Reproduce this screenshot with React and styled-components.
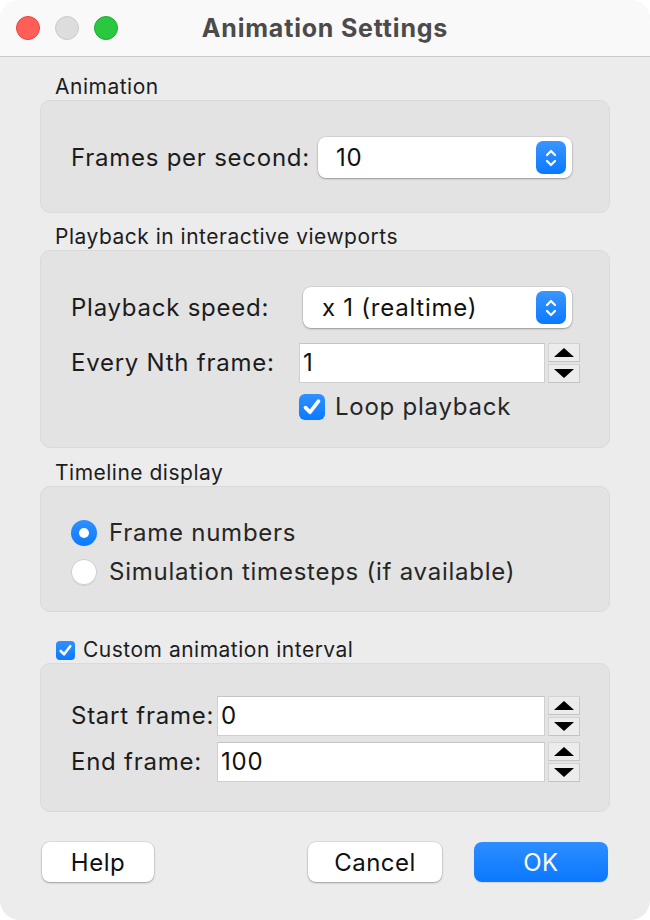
import React from "react";
import styled, { createGlobalStyle } from "styled-components";

const GlobalStyle = createGlobalStyle`
  html, body {
    margin: 0;
    padding: 0;
    background: #ffffff;
  }
  body {
    font-family: Inter, "Liberation Sans", sans-serif;
    -webkit-font-smoothing: antialiased;
  }
  * { box-sizing: border-box; }
`;

const Window = styled.div`
  width: 650px;
  height: 920px;
  border-radius: 20px;
  overflow: hidden;
  background: #ececec;
  display: flex;
  flex-direction: column;
`;

const TitleBar = styled.div`
  height: 57px;
  flex-shrink: 0;
  background: #f9f9f9;
  border-bottom: 1px solid #cbcbcb;
  display: grid;
  grid-template-columns: 1fr auto 1fr;
  align-items: center;
`;

const Lights = styled.div`
  display: flex;
  gap: 15px;
  padding-left: 16px;
`;

const Light = styled.span`
  width: 24px;
  height: 24px;
  border-radius: 50%;
  background: ${(p) => p.color};
  border: 1px solid ${(p) => p.edge};
`;

const Title = styled.div`
  font-size: 25px;
  font-weight: 700;
  color: #4b4b4b;
  letter-spacing: 0.8px;
`;

const Body = styled.div`
  flex: 1;
  display: flex;
  flex-direction: column;
  padding: 19px 40px 0;
`;

const SectionLabel = styled.div`
  font-size: 21px;
  line-height: 22px;
  letter-spacing: 0.5px;
  color: #1d1d1d;
  padding-left: 15px;
  margin-top: ${(p) => p.top || 0}px;
  margin-bottom: 2px;
  display: flex;
  align-items: center;
  gap: 8px;
`;

const Group = styled.div`
  background: #e3e3e3;
  border: 1px solid #dadada;
  border-radius: 10px;
  padding: ${(p) => p.pad};
  display: grid;
  grid-template-columns: ${(p) => p.cols || "auto 1fr"};
  align-items: center;
  row-gap: ${(p) => p.gap || 0}px;
  font-size: 24px;
  line-height: 28px;
  letter-spacing: 0.75px;
`;

const FieldLabel = styled.div`
  color: #1c1c1c;
  white-space: nowrap;
`;

const Popup = styled.div`
  height: 41px;
  margin-left: ${(p) => p.inset || 0}px;
  margin-right: 37px;
  background: #ffffff;
  border-radius: 8px;
  box-shadow: 0 1px 2px rgba(0, 0, 0, 0.3), 0 0 0 0.5px rgba(0, 0, 0, 0.12);
  display: flex;
  align-items: center;
  justify-content: space-between;
  padding: 0 6px 0 ${(p) => p.textPad || 18}px;
  color: #111;
`;

const Stepper = styled.div`
  width: 30px;
  height: 33px;
  border-radius: 7px;
  background: linear-gradient(#3a95ff, #0a79ff);
  display: flex;
  align-items: center;
  justify-content: center;
`;

const SpinRow = styled.div`
  display: flex;
  align-items: center;
  gap: 3px;
  margin-right: 29px;
`;

const TextField = styled.div`
  flex: 1;
  height: 40px;
  background: #ffffff;
  border: 1px solid #cfcfcf;
  border-top-color: #c4c4c4;
  display: flex;
  align-items: center;
  padding-left: 3px;
  color: #111;
`;

const SpinButtons = styled.div`
  display: flex;
  flex-direction: column;
  gap: 2px;
`;

const SpinButton = styled.div`
  width: 32px;
  height: 19px;
  background: #ececec;
  border: 1px solid #d3d3d3;
  border-right-color: #c8c8c8;
  border-bottom-color: #c3c3c3;
  display: flex;
  align-items: center;
  justify-content: center;
`;

const CheckRow = styled.div`
  grid-column: 2;
  display: flex;
  align-items: center;
  gap: 10px;
  margin-top: -5px;
  color: #262626;
`;

const CheckBox = styled.span`
  width: ${(p) => p.size}px;
  height: ${(p) => p.size}px;
  border-radius: ${(p) => (p.size > 22 ? 6 : 4)}px;
  background: linear-gradient(#2f90ff, #0b7aff);
  display: inline-flex;
  align-items: center;
  justify-content: center;
  flex-shrink: 0;
`;

const RadioRow = styled.div`
  display: flex;
  align-items: center;
  gap: 12px;
  color: #262626;
`;

const Radio = styled.span`
  width: 26px;
  height: 26px;
  border-radius: 50%;
  flex-shrink: 0;
  display: inline-flex;
  align-items: center;
  justify-content: center;
  background: ${(p) => (p.on ? "linear-gradient(#2f90ff, #0b7aff)" : "#ffffff")};
  box-shadow: ${(p) =>
    p.on ? "none" : "0 0 0 1px #cdcdcd inset, 0 1px 1px rgba(0,0,0,0.08)"};
  &::after {
    content: "";
    display: ${(p) => (p.on ? "block" : "none")};
    width: 10px;
    height: 10px;
    border-radius: 50%;
    background: #ffffff;
  }
`;

const Footer = styled.div`
  display: flex;
  align-items: center;
  padding: 30px 2px 0;
  gap: 32px;
`;

const Button = styled.div`
  width: ${(p) => p.w}px;
  height: 40px;
  border-radius: 8px;
  display: flex;
  align-items: center;
  justify-content: center;
  font-size: 24px;
  letter-spacing: 0.5px;
  color: ${(p) => (p.primary ? "#ffffff" : "#111111")};
  background: ${(p) =>
    p.primary ? "linear-gradient(#2d8eff, #0a78ff)" : "#ffffff"};
  box-shadow: ${(p) =>
    p.primary
      ? "0 1px 1px rgba(0,0,0,0.1)"
      : "0 1px 2px rgba(0,0,0,0.3), 0 0 0 0.5px rgba(0,0,0,0.12)"};
  margin-left: ${(p) => (p.push ? "auto" : "0")};
`;

const Chevrons = () => (
  <svg width="14" height="24" viewBox="0 0 14 24">
    <path
      d="M3 9 L7 5 L11 9 M3 15 L7 19 L11 15"
      fill="none"
      stroke="#fff"
      strokeWidth="2.2"
      strokeLinecap="round"
      strokeLinejoin="round"
    />
  </svg>
);

const Triangle = ({ down }) => (
  <svg width="22" height="11" viewBox="0 0 22 11">
    <path d={down ? "M1 1 H21 L11 10 Z" : "M1 10 H21 L11 1 Z"} fill="#000" />
  </svg>
);

const Check = ({ size }) => (
  <svg width={size} height={size} viewBox="0 0 20 20">
    <path
      d="M5 10.5 L8.5 14 L15 5.5"
      fill="none"
      stroke="#fff"
      strokeWidth="2.8"
      strokeLinecap="round"
      strokeLinejoin="round"
    />
  </svg>
);

const Spin = ({ value }) => (
  <SpinRow>
    <TextField>{value}</TextField>
    <SpinButtons>
      <SpinButton>
        <Triangle />
      </SpinButton>
      <SpinButton>
        <Triangle down />
      </SpinButton>
    </SpinButtons>
  </SpinRow>
);

export default function App() {
  return (
    <>
      <GlobalStyle />
      <Window>
        <TitleBar>
          <Lights>
            <Light color="#ff5f57" edge="#e2463f" />
            <Light color="#dddddd" edge="#cacaca" />
            <Light color="#2ac840" edge="#1fa934" />
          </Lights>
          <Title>Animation Settings</Title>
          <div />
        </TitleBar>
        <Body>
          <SectionLabel>Animation</SectionLabel>
          <Group pad="36px 0 34px 30px">
            <FieldLabel>Frames per second:</FieldLabel>
            <Popup inset={8}>
              10
              <Stepper>
                <Chevrons />
              </Stepper>
            </Popup>
          </Group>

          <SectionLabel top={13}>Playback in interactive viewports</SectionLabel>
          <Group pad="36px 0 26px 30px" cols="228px 1fr" gap={15}>
            <FieldLabel>Playback speed:</FieldLabel>
            <Popup inset={4} textPad={19}>
              x 1 (realtime)
              <Stepper>
                <Chevrons />
              </Stepper>
            </Popup>
            <FieldLabel>Every Nth frame:</FieldLabel>
            <Spin value="1" />
            <CheckRow>
              <CheckBox size={26}>
                <Check size={26} />
              </CheckBox>
              Loop playback
            </CheckRow>
          </Group>

          <SectionLabel top={14}>Timeline display</SectionLabel>
          <Group pad="32px 0 25px 30px" cols="1fr" gap={11}>
            <RadioRow>
              <Radio on />
              Frame numbers
            </RadioRow>
            <RadioRow>
              <Radio />
              Simulation timesteps (if available)
            </RadioRow>
          </Group>

          <SectionLabel top={27}>
            <CheckBox size={19} style={{ marginLeft: 1 }}>
              <Check size={19} />
            </CheckBox>
            Custom animation interval
          </SectionLabel>
          <Group pad="32px 0 29px 30px" cols="146px 1fr" gap={6}>
            <FieldLabel>Start frame:</FieldLabel>
            <Spin value="0" />
            <FieldLabel>End frame:</FieldLabel>
            <Spin value="100" />
          </Group>

          <Footer>
            <Button w={112}>Help</Button>
            <Button w={134} push>
              Cancel
            </Button>
            <Button w={134} primary>
              OK
            </Button>
          </Footer>
        </Body>
      </Window>
    </>
  );
}
